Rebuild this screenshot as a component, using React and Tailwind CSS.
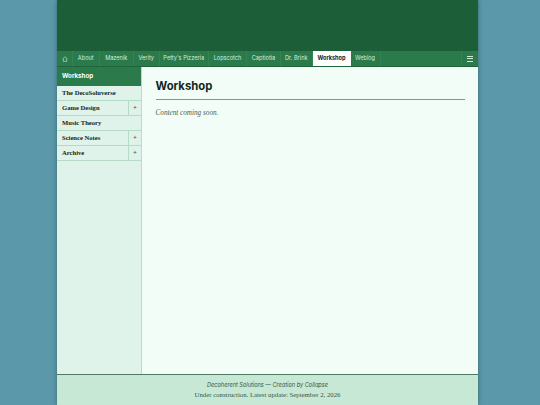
import React from 'react';

const navItems = [
  { label: 'About', width: 'w-[26.5px]' },
  { label: 'Mazenik', width: 'w-[34.5px]' },
  { label: 'Verity', width: 'w-[25.5px]' },
  { label: "Petty's Pizzeria", width: 'w-[49.5px]' },
  { label: 'Lopscotch', width: 'w-[38px]' },
  { label: 'Captiotia', width: 'w-[34px]' },
  { label: 'Dr. Brink', width: 'w-[31.5px]' },
];

const sideItems = [
  { label: 'The DecoSoluverse' },
  { label: 'Game Design', more: true },
  { label: 'Music Theory' },
  { label: 'Science Notes', more: true },
  { label: 'Archive', more: true },
];

const App = () => {
  return (
    <div className="h-[405px] w-[540px] overflow-hidden bg-[#5b99aa] flex pl-[57px]">
      <div className="w-[421px] h-full flex flex-col bg-[#f3fdf7] shadow-[0_0_5px_rgba(0,0,0,0.35)] font-['Inter',sans-serif]">
        <div className="h-[51px] shrink-0 bg-[#1b5e37]" />

        <nav className="h-[16px] shrink-0 flex bg-[#2a7a4b] border-b border-[#1f6339] text-[5.6px] leading-[15px] text-[#d5ecdf]">
          <div className="w-[16px] flex items-center justify-center border-r border-[#348356]">
            <svg width="6" height="6" viewBox="0 0 10 10" fill="none" stroke="#d5ecdf" strokeWidth="1">
              <path d="M1 5 5 1.2 9 5M2.2 4.4V9h5.6V4.4" />
            </svg>
          </div>
          {navItems.map((item) => (
            <div key={item.label} className={`${item.width} text-center border-r border-[#348356]`}>{item.label}</div>
          ))}
          <div className="w-[38px] text-center bg-white text-[#12261b] font-bold">Workshop</div>
          <div className="w-[30px] text-center border-r border-[#348356]">Weblog</div>
          <div className="ml-auto w-[17px] flex flex-col items-center justify-center gap-[1.5px] border-l border-[#348356]">
            <span className="w-[6px] h-[1px] bg-[#cfe9da]" />
            <span className="w-[6px] h-[1px] bg-[#cfe9da]" />
            <span className="w-[6px] h-[1px] bg-[#cfe9da]" />
          </div>
        </nav>

        <div className="flex-1 min-h-0 flex">
          <aside className="w-[85px] shrink-0 bg-[#e0f3ea] border-r border-[#b9dcc9]">
            <div className="h-[18.5px] px-[5px] bg-[#2a7a4b] text-white font-bold text-[6.2px] leading-[18px]">Workshop</div>
            {sideItems.map((item) => (
              <div key={item.label} className="h-[15px] flex border-b border-[#b5dac6] font-['Liberation_Serif',serif] font-bold text-[6.6px] leading-[13.5px] text-[#12261b]">
                <span className="flex-1 pl-[5px]">{item.label}</span>
                {item.more && (
                  <span className="w-[13px] text-center border-l border-[#b5dac6] font-['Inter',sans-serif] font-normal text-[#3f5c4c]">+</span>
                )}
              </div>
            ))}
          </aside>

          <main className="flex-1 px-[13.5px] pt-[11px]">
            <h1 className="text-[11.3px] leading-[16px] font-bold text-[#12261b] pb-[5px] border-b-[1.5px] border-[#7d9c8c]">Workshop</h1>
            <p className="mt-[7.5px] font-['Liberation_Serif',serif] italic text-[7.2px] leading-[10px] text-[#46604f]">Content coming soon.</p>
          </main>
        </div>

        <footer className="h-[31px] shrink-0 bg-[#c6e8d5] border-t border-[#4d7a61] pt-[5px] text-center text-[#3a5546]">
          <p className="italic text-[5.6px] leading-[10px]">Decoherent Solutions — Creation by Collapse</p>
          <p className="font-['Liberation_Serif',serif] text-[6.75px] leading-[10px]">Under construction. Latest update: September 2, 2026</p>
        </footer>
      </div>
    </div>
  );
};

export default App;
